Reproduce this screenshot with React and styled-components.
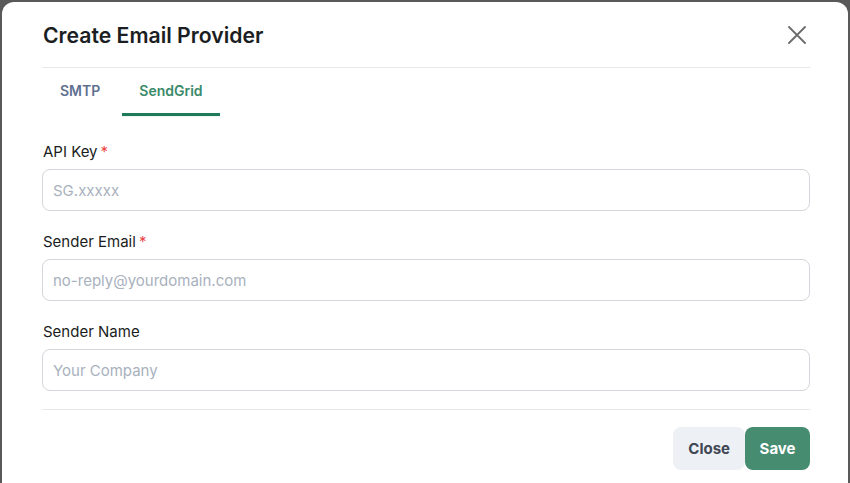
import styled, { createGlobalStyle } from "styled-components";

const GlobalStyle = createGlobalStyle`
  html, body {
    margin: 0;
    padding: 0;
    background: #595959;
    font-family: Inter, "Noto Sans", sans-serif;
  }
  * { box-sizing: border-box; }
`

const Page = styled.div`
  width: 850px;
  height: 483px;
  overflow: hidden;
  padding: 2px 2px 0 2px;
`

const Modal = styled.div`
  background: #ffffff;
  border-radius: 12px;
  height: 520px;
  padding: 0 38px 0 40px;
`

const Header = styled.div`
  display: flex;
  align-items: center;
  justify-content: space-between;
  padding: 19px 0 18px 1px;
  border-bottom: 1px solid #e6e8eb;
`

const Title = styled.h2`
  margin: 0;
  font-size: 21.2px;
  line-height: 28px;
  font-weight: 600;
  color: #1b1e22;
`

const CloseIcon = styled.button`
  display: flex;
  border: none;
  background: none;
  padding: 0;
  margin-right: 4px;
  cursor: pointer;
`

const TabList = styled.div`
  display: flex;
  gap: 5px;
  padding-left: 1px;
`

const Tab = styled.div`
  padding: 13px 17px 12px;
  font-size: 14px;
  line-height: 20px;
  font-weight: 600;
  color: ${(p) => (p.$active ? "#3a8a69" : "#5f7090")};
  border-bottom: 3px solid ${(p) => (p.$active ? "#1f7a5a" : "transparent")};
  box-shadow: ${(p) => (p.$active ? "0 1px 0 #eef6f1" : "none")};
`

const Form = styled.div`
  display: flex;
  flex-direction: column;
  gap: 21px;
  padding-top: 26px;
`

const Field = styled.div`
  display: flex;
  flex-direction: column;
`

const Label = styled.label`
  font-size: 15px;
  line-height: 20px;
  font-weight: 400;
  color: #1a1d21;
  margin: 0 0 7px 1px;
`

const Required = styled.span`
  color: #ef4444;
  margin-left: 3px;
`

const Input = styled.input`
  height: 42px;
  border: 1px solid #d3d6db;
  border-radius: 8px;
  padding: 0 10px;
  font-family: inherit;
  font-size: 15px;
  color: #1f2328;
  outline: none;
  &::placeholder {
    color: #a9b1bd;
  }
`

const Footer = styled.div`
  margin-top: 18px;
  border-top: 1px solid #e6e8eb;
  padding-top: 17px;
  display: flex;
  justify-content: flex-end;
`

const Button = styled.button`
  height: 43px;
  padding: 0 ${(p) => (p.$primary ? "14.5px" : "15px")};
  border: none;
  border-radius: 8px;
  font-family: inherit;
  font-size: 15px;
  font-weight: 700;
  cursor: pointer;
  background: ${(p) => (p.$primary ? "#468c70" : "#edf0f4")};
  color: ${(p) => (p.$primary ? "#ffffff" : "#3f4654")};
`

const fields = [
  { label: "API Key", placeholder: "SG.xxxxx", required: true },
  { label: "Sender Email", placeholder: "no-reply@yourdomain.com", required: true },
  { label: "Sender Name", placeholder: "Your Company", required: false },
];

export default function App() {
  return (
    <>
      <GlobalStyle />
      <Page>
        <Modal>
          <Header>
            <Title>Create Email Provider</Title>
            <CloseIcon aria-label="Close">
              <svg width="18" height="18" viewBox="0 0 18 18">
                <path d="M1 1 L17 17 M17 1 L1 17" stroke="#6b6b6b" strokeWidth="1.8" strokeLinecap="round" />
              </svg>
            </CloseIcon>
          </Header>
          <TabList>
            <Tab>SMTP</Tab>
            <Tab $active>SendGrid</Tab>
          </TabList>
          <Form>
            {fields.map((f) => (
              <Field key={f.label}>
                <Label>
                  {f.label}
                  {f.required && <Required>*</Required>}
                </Label>
                <Input placeholder={f.placeholder} />
              </Field>
            ))}
          </Form>
          <Footer>
            <Button>Close</Button>
            <Button $primary>Save</Button>
          </Footer>
        </Modal>
      </Page>
    </>
  );
}
